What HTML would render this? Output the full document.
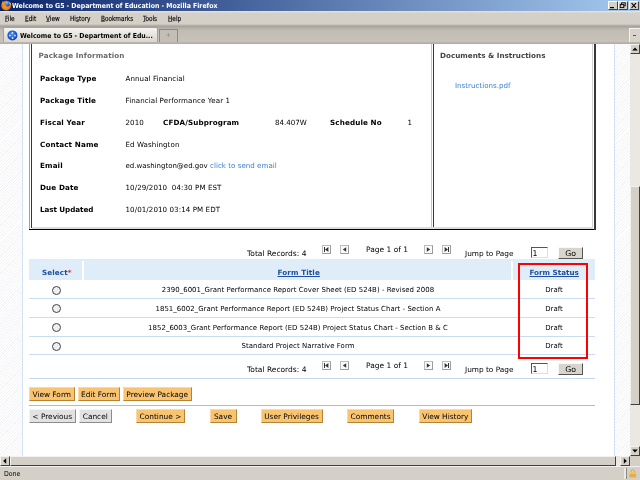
<!DOCTYPE html>
<html>
<head>
<meta charset="utf-8">
<title>Welcome to G5 - Department of Education</title>
<style>
html,body{margin:0;padding:0;}
body{width:640px;height:480px;overflow:hidden;position:relative;background:#d4d0c8;font-family:"DejaVu Sans","Liberation Sans",sans-serif;font-size:7.1px;color:#000;}
.a{position:absolute;white-space:nowrap;}
.t{position:absolute;white-space:nowrap;line-height:10px;height:10px;}
.ch{font-family:"DejaVu Sans Condensed","Liberation Sans",sans-serif;}
#titlebar{left:0;top:0;width:640px;height:11px;background:linear-gradient(to right,#0a246a 0%,#a6caf0 100%);}
#titletext{left:12px;top:1px;color:#fff;font-weight:bold;font-size:6.9px;line-height:11px;}
#menubar{left:0;top:11px;width:640px;height:16px;background:linear-gradient(to bottom,#e6e3dc 0,#dedbd3 1.2px,#d4d0c8 2.2px);}
#menubar u{text-decoration-color:rgba(0,0,0,0.5);text-underline-offset:0.4px;}
#menubar span{position:absolute;top:3.4px;font-size:7.2px;line-height:10px;color:#000;transform:scaleX(0.89);transform-origin:0 0;-webkit-text-stroke:0.15px #000;}
#tabbar{left:0;top:24px;width:640px;height:20px;background:linear-gradient(to bottom,#d2cec6 0,#c0bcb4 1px,#a9a59d 2px,#a8a49c 2.6px,#b6b2aa 4px,#c1bdb5 7px,#c7c3bb 17.4px,#bab6ae 18.3px,#b0aca4 20px);}
#tab{left:2.5px;top:27.4px;width:155px;height:15px;background:linear-gradient(to bottom,#f6f5f1,#e6e3dd 50%,#d9d6cf);border:1px solid #a6a29a;border-bottom:none;border-radius:2px 2px 0 0;box-sizing:border-box;}
#tabtext{left:20px;top:30.7px;font-weight:bold;font-size:6.9px;line-height:11px;}
#newtab{left:158.6px;top:28.5px;width:19.2px;height:13.4px;background:#c3bfb7;border:1px solid #8e8a82;border-bottom:none;box-sizing:border-box;}
#tablist{left:629px;top:28px;width:11px;height:14px;background:#d8d4cc;border-left:1px solid #f4f2ee;border-top:1px solid #f4f2ee;box-sizing:border-box;}
.wb{position:absolute;top:1px;width:10px;height:9px;background:#d4d0c8;box-sizing:border-box;border:1px solid;border-color:#fff #404040 #404040 #fff;}
#page{left:0;top:44px;width:630px;height:412px;background:#fff;overflow:hidden;}
.hatch{position:absolute;top:0;height:412px;background:repeating-linear-gradient(135deg,#ffffff 0,#ffffff 1.3px,#f0f2f5 1.3px,#f0f2f5 2.0px);}
#hl{left:0;width:22px;border-right:1px solid #d3e2f5;}
#hr{left:614px;width:16px;border-left:1px solid #d3e2f5;box-sizing:border-box;}
.lbl{font-weight:bold;font-size:7.2px;letter-spacing:0.12px;}
.lnk{color:#3b7fd0;}
.val{letter-spacing:0.08px;}
.pg{font-size:7.5px;}
.hd{font-weight:bold;font-size:7.2px;}
.box{position:absolute;box-sizing:border-box;}
.row{position:absolute;left:29px;width:566px;height:1px;background:#c9dcf1;}
.pb{position:absolute;width:9px;height:9px;box-sizing:border-box;border:1px solid;border-color:#bcbcbc #9c9c9c #9c9c9c #bcbcbc;background:#fafafa;}
.ob{position:absolute;height:14px;box-sizing:border-box;background:#f8c471;border:1px solid;border-color:#fbd9a4 #b9822f #b9822f #fbd9a4;text-align:center;line-height:14px;font-size:7.4px;}
.gb{position:absolute;height:14px;box-sizing:border-box;background:#e2e2e2;border:1px solid;border-color:#f4f4f4 #8c8c8c #8c8c8c #f4f4f4;text-align:center;line-height:14px;font-size:7.4px;}
.rad{position:absolute;width:9px;height:9px;box-sizing:border-box;border:1px solid #444;border-radius:50%;background:#efefef;}
.inp{position:absolute;width:17px;height:11px;box-sizing:border-box;border:1px solid;border-color:#555 #ddd #ddd #555;background:#fff;font-size:7.8px;line-height:11px;padding-left:1px;}
.go{position:absolute;width:24.6px;height:12px;box-sizing:border-box;background:#d8d5cd;border:1px solid;border-color:#f8f8f8 #555 #555 #f8f8f8;text-align:center;font-size:7.8px;line-height:12px;}
.sbtn{background:#d4d0c8;box-sizing:border-box;border:1px solid;border-color:#f4f2ee #404040 #404040 #f4f2ee;}
</style>
</head>
<body>
<div id="root" class="a" style="left:0;top:0;width:640px;height:480px;overflow:hidden;will-change:transform">

<div class="a" id="titlebar"></div>
<svg class="a" style="left:1px;top:0" width="11" height="11" viewBox="0 0 11 11"><defs><radialGradient id="fo" cx="0.45" cy="0.5" r="0.6"><stop offset="0" stop-color="#fbb030"/><stop offset="0.7" stop-color="#ee7a14"/><stop offset="1" stop-color="#d8500c"/></radialGradient><radialGradient id="fb" cx="0.4" cy="0.3" r="0.8"><stop offset="0" stop-color="#7fd0ff"/><stop offset="0.6" stop-color="#2a6ad8"/><stop offset="1" stop-color="#0c2c8c"/></radialGradient></defs><circle cx="5.2" cy="5.6" r="4.9" fill="url(#fo)"/><circle cx="6.1" cy="3.7" r="2.7" fill="url(#fb)"/><path d="M0.6 4.4 L1.4 1 L3 2.2 Q4.6 1.6 5.2 2.6 Q4 3.2 4.2 4.4 Q4.8 5.6 6.4 5.6 Q5.6 6.8 4 6.6 Q1.6 6.4 0.6 4.4Z" fill="#f08a1c"/><path d="M8.6 1.8 Q10.4 3.4 9.8 6 Q9.2 4.2 8.2 3.4Z" fill="#f8c038"/><circle cx="2.4" cy="3.6" r="0.5" fill="#fbd048"/></svg>
<div class="a ch" id="titletext">Welcome to G5 - Department of Education - Mozilla Firefox</div>
<div class="wb" style="left:607.5px"></div>
<div class="wb" style="left:617.6px"></div>
<div class="wb" style="left:629px"></div>
<svg class="a" style="left:607px;top:1px" width="32" height="9" viewBox="0 0 32 9"><rect x="3" y="6" width="4" height="1.2" fill="#000"/><rect x="14.6" y="1.8" width="3.6" height="3" fill="none" stroke="#000" stroke-width="0.9"/><rect x="13.2" y="3.6" width="3.6" height="3" fill="#d4d0c8" stroke="#000" stroke-width="0.9"/><path d="M24.6 2.2 L29 6.8 M29 2.2 L24.6 6.8" stroke="#000" stroke-width="1.05"/></svg>
<div class="a ch" id="menubar">
<span style="left:4.8px"><u>F</u>ile</span>
<span style="left:25px"><u>E</u>dit</span>
<span style="left:46.4px"><u>V</u>iew</span>
<span style="left:69.8px">Hi<u>s</u>tory</span>
<span style="left:100.8px"><u>B</u>ookmarks</span>
<span style="left:143px"><u>T</u>ools</span>
<span style="left:168.4px"><u>H</u>elp</span>
</div>
<div class="a" id="tabbar"></div>
<div class="a" id="tab"></div>
<svg class="a" style="left:7px;top:30px" width="11" height="11" viewBox="0 0 11 11"><defs><radialGradient id="tg" cx="0.45" cy="0.4" r="0.65"><stop offset="0" stop-color="#4a9cf4"/><stop offset="0.6" stop-color="#1c5cd8"/><stop offset="1" stop-color="#1038a8"/></radialGradient></defs><circle cx="5.4" cy="5.4" r="5" fill="url(#tg)"/><circle cx="5.4" cy="2.9" r="0.95" fill="#f8e4c4"/><circle cx="2.9" cy="5.6" r="0.95" fill="#f8e4c4"/><circle cx="8" cy="5.6" r="0.95" fill="#f8e4c4"/><circle cx="5.6" cy="8" r="0.95" fill="#f8e4c4"/></svg>
<div class="a ch" id="tabtext">Welcome to G5 - Department of Edu...</div>
<div class="a" id="newtab"></div>
<div class="a" style="left:165.4px;top:32.2px;font-size:6.5px;line-height:7px;color:#8a8680">+</div>
<div class="a" id="tablist"></div>
<div class="a" style="left:633.4px;top:35px;width:3px;height:1px;background:#555"></div>
<div class="a" id="page">
<div class="hatch" id="hl"></div>
<div class="hatch" id="hr"></div>
</div>

<div class="a" id="content" style="left:0;top:44px;width:630px;height:412px;overflow:hidden"><div class="a" style="left:0;top:-44px;width:630px;height:480px">
<div class="box" style="left:29px;top:30px;width:1px;height:200px;background:#a0a0a0"></div>
<div class="box" style="left:31px;top:30px;width:1px;height:198px;background:#383838"></div>
<div class="box" style="left:32px;top:227px;width:561px;height:2px;background:#dcdcdc"></div>
<div class="box" style="left:29px;top:229px;width:567px;height:1px;background:#000"></div>
<div class="box" style="left:431px;top:30px;width:1px;height:197px;background:#c4c4c4"></div>
<div class="box" style="left:433px;top:30px;width:1px;height:197px;background:#383838"></div>
<div class="box" style="left:592px;top:30px;width:1px;height:197px;background:#d0d0d0"></div>
<div class="box" style="left:594px;top:30px;width:2px;height:200px;background:#383838"></div>
<div class="t hd" style="left:38.6px;top:51px;color:#6a6a6a;letter-spacing:0.1px">Package Information</div>
<div class="t hd" style="left:440px;top:51px;color:#444">Documents &amp; Instructions</div>
<div class="t lnk" style="left:455px;top:81px;">Instructions.pdf</div>
<div class="t lbl" style="left:40px;top:74px;">Package Type</div>
<div class="t val" style="left:125.5px;top:74px;">Annual Financial</div>
<div class="t lbl" style="left:40px;top:96px;">Package Title</div>
<div class="t val" style="left:125.5px;top:96px;">Financial Performance Year 1</div>
<div class="t lbl" style="left:40px;top:118px;">Fiscal Year</div>
<div class="t val" style="left:125.5px;top:118px;">2010</div>
<div class="t lbl" style="left:40px;top:140px;">Contact Name</div>
<div class="t val" style="left:125.5px;top:140px;">Ed Washington</div>
<div class="t lbl" style="left:40px;top:161px;">Email</div>
<div class="t val" style="left:125.5px;top:161px;"><span style="letter-spacing:0;font-size:7px">ed.washington@ed.gov</span></div>
<div class="t lbl" style="left:40px;top:183px;">Due Date</div>
<div class="t val" style="left:125.5px;top:183px;">10/29/2010&nbsp; 04:30 PM EST</div>
<div class="t lbl" style="left:40px;top:205px;letter-spacing:-0.06px">Last Updated</div>
<div class="t val" style="left:125.5px;top:205px;">10/01/2010 03:14 PM EDT</div>
<div class="t lnk" style="left:210px;top:161px;letter-spacing:0.02px">click to send email</div>
<div class="t lbl" style="left:163px;top:118px;">CFDA/Subprogram</div>
<div class="t " style="left:275px;top:118px;">84.407W</div>
<div class="t lbl" style="left:330px;top:118px;">Schedule No</div>
<div class="t " style="left:407.5px;top:118px;">1</div>
<div class="t pg" style="left:247px;top:249px;">Total Records: 4</div>
<div class="pb" style="left:322px;top:245px"></div>
<svg class="a" style="left:322px;top:245px" width="9" height="9" viewBox="0 0 9 9"><rect x="2" y="2" width="1" height="5" fill="#333"/><path d="M6.4 2 L3 4.5 L6.4 7Z" fill="#333"/></svg>
<div class="pb" style="left:340.4px;top:245px"></div>
<svg class="a" style="left:340.4px;top:245px" width="9" height="9" viewBox="0 0 9 9"><path d="M6.2 2.2 L2.8 4.5 L6.2 6.8Z" fill="#333"/></svg>
<div class="pb" style="left:424px;top:245px"></div>
<svg class="a" style="left:424px;top:245px" width="9" height="9" viewBox="0 0 9 9"><path d="M2.8 2.2 L6.2 4.5 L2.8 6.8Z" fill="#333"/></svg>
<div class="pb" style="left:442.3px;top:245px"></div>
<svg class="a" style="left:442.3px;top:245px" width="9" height="9" viewBox="0 0 9 9"><rect x="6" y="2" width="1" height="5" fill="#333"/><path d="M2.6 2 L6 4.5 L2.6 7Z" fill="#333"/></svg>
<div class="t pg" style="left:366px;top:245px;">Page 1 of 1</div>
<div class="t pg" style="left:465px;top:249px;font-size:7.35px">Jump to Page</div>
<div class="inp" style="left:530.5px;top:247px">1</div>
<div class="go" style="left:558.4px;top:247px">Go</div>
<div class="box" style="left:29px;top:259px;width:566px;height:21px;background:#deedf8"></div>
<div class="box" style="left:82px;top:261px;width:1.5px;height:19px;background:#fff"></div>
<div class="box" style="left:511px;top:261px;width:1.5px;height:19px;background:#fff"></div>
<div class="t lbl" style="left:42px;top:268px;color:#1f4fa0">Select<span style="color:#e02020">*</span></div>
<div class="t lbl" style="left:277.5px;top:268px;color:#1f4fa0"><u>Form Title</u></div>
<div class="t lbl" style="left:529.5px;top:268px;color:#1f4fa0;letter-spacing:0"><u>Form Status</u></div>
<div class="rad" style="left:52px;top:285.5px"></div>
<div class="t " style="left:83px;top:285px;width:430px;text-align:center;font-size:6.95px;letter-spacing:0.04px">2390_6001_Grant Performance Report Cover Sheet (ED 524B) - Revised 2008</div>
<div class="t " style="left:513px;top:285px;width:82px;text-align:center;font-size:6.95px">Draft</div>
<div class="rad" style="left:52px;top:304.2px"></div>
<div class="t " style="left:83px;top:304px;width:430px;text-align:center;font-size:6.95px;letter-spacing:0.04px">1851_6002_Grant Performance Report (ED 524B) Project Status Chart - Section A</div>
<div class="t " style="left:513px;top:304px;width:82px;text-align:center;font-size:6.95px">Draft</div>
<div class="rad" style="left:52px;top:322.9px"></div>
<div class="t " style="left:83px;top:323px;width:430px;text-align:center;font-size:6.95px;letter-spacing:0.04px">1852_6003_Grant Performance Report (ED 524B) Project Status Chart - Section B &amp; C</div>
<div class="t " style="left:513px;top:323px;width:82px;text-align:center;font-size:6.95px">Draft</div>
<div class="rad" style="left:52px;top:341.6px"></div>
<div class="t " style="left:83px;top:341px;width:430px;text-align:center;font-size:6.95px;letter-spacing:0.04px">Standard Project Narrative Form</div>
<div class="t " style="left:513px;top:341px;width:82px;text-align:center;font-size:6.95px">Draft</div>
<div class="row" style="top:298px"></div>
<div class="row" style="top:317px"></div>
<div class="row" style="top:336px"></div>
<div class="row" style="top:354px"></div>
<div class="box" style="left:518px;top:263px;width:70px;height:95.5px;border:2px solid #ff0000"></div>
<div class="t pg" style="left:247px;top:365px;">Total Records: 4</div>
<div class="pb" style="left:322px;top:361px"></div>
<svg class="a" style="left:322px;top:361px" width="9" height="9" viewBox="0 0 9 9"><rect x="2" y="2" width="1" height="5" fill="#333"/><path d="M6.4 2 L3 4.5 L6.4 7Z" fill="#333"/></svg>
<div class="pb" style="left:340.4px;top:361px"></div>
<svg class="a" style="left:340.4px;top:361px" width="9" height="9" viewBox="0 0 9 9"><path d="M6.2 2.2 L2.8 4.5 L6.2 6.8Z" fill="#333"/></svg>
<div class="pb" style="left:424px;top:361px"></div>
<svg class="a" style="left:424px;top:361px" width="9" height="9" viewBox="0 0 9 9"><path d="M2.8 2.2 L6.2 4.5 L2.8 6.8Z" fill="#333"/></svg>
<div class="pb" style="left:442.3px;top:361px"></div>
<svg class="a" style="left:442.3px;top:361px" width="9" height="9" viewBox="0 0 9 9"><rect x="6" y="2" width="1" height="5" fill="#333"/><path d="M2.6 2 L6 4.5 L2.6 7Z" fill="#333"/></svg>
<div class="t pg" style="left:366px;top:361px;">Page 1 of 1</div>
<div class="t pg" style="left:465px;top:365px;font-size:7.35px">Jump to Page</div>
<div class="inp" style="left:530.5px;top:363px">1</div>
<div class="go" style="left:558.4px;top:363px">Go</div>
<div class="box" style="left:29px;top:378px;width:566px;height:1px;background:#c4d9f0"></div>
<div class="box" style="left:29px;top:405px;width:566px;height:1px;background:#9dc0e8"></div>
<div class="ob" style="left:29px;top:387px;width:45.5px">View Form</div>
<div class="ob" style="left:78px;top:387px;width:41.5px">Edit Form</div>
<div class="ob" style="left:122.5px;top:387px;width:69.5px">Preview Package</div>
<div class="gb" style="left:29px;top:408.7px;width:46.5px">&lt; Previous</div>
<div class="gb" style="left:79px;top:408.7px;width:32.5px">Cancel</div>
<div class="ob" style="left:136px;top:408.7px;width:49px">Continue &gt;</div>
<div class="ob" style="left:209.5px;top:408.7px;width:27px">Save</div>
<div class="ob" style="left:260.5px;top:408.7px;width:62px">User Privileges</div>
<div class="ob" style="left:346.7px;top:408.7px;width:47.7px">Comments</div>
<div class="ob" style="left:418.7px;top:408.7px;width:53.3px">View History</div>
</div></div>


<div class="a" id="vsb" style="left:630px;top:44px;width:10px;height:412px;background:#ebe8e3"></div>
<div class="a sbtn" style="left:630px;top:44px;width:10px;height:10px"></div>
<div class="a sbtn" style="left:630px;top:185.6px;width:10px;height:219px"></div>
<div class="a sbtn" style="left:630px;top:446px;width:10px;height:10px"></div>
<svg class="a" style="left:630px;top:44px" width="10" height="10" viewBox="0 0 10 10"><path d="M2.2 6.4 L5 3.4 L7.8 6.4Z" fill="#000"/></svg>
<svg class="a" style="left:630px;top:446px" width="10" height="10" viewBox="0 0 10 10"><path d="M2.2 3.6 L5 6.6 L7.8 3.6Z" fill="#000"/></svg>
<div class="a" style="left:0;top:456px;width:640px;height:10px;background:#d4d0c8"></div>
<div class="a" style="left:10px;top:456px;width:620px;height:10px;background:#ebe8e3"></div>
<div class="a sbtn" style="left:0;top:456px;width:10px;height:10px"></div>
<div class="a sbtn" style="left:10px;top:456px;width:606px;height:10px"></div>
<div class="a sbtn" style="left:619.5px;top:456px;width:10.5px;height:10px"></div>
<svg class="a" style="left:0;top:456px" width="10" height="10" viewBox="0 0 10 10"><path d="M6.2 2.2 L3.2 5 L6.2 7.8Z" fill="#000"/></svg>
<svg class="a" style="left:620px;top:456px" width="10" height="10" viewBox="0 0 10 10"><path d="M3.8 2.2 L6.8 5 L3.8 7.8Z" fill="#000"/></svg>
<div class="a" style="left:0;top:466px;width:640px;height:14px;background:#d4d0c8;border-top:1px solid #f2f0ec;box-sizing:border-box"></div>
<div class="a ch" style="left:4px;top:469px;font-size:6.9px;line-height:10px">Done</div>
<div class="a" style="left:626px;top:468px;width:1px;height:11px;background:#8c8880"></div>
<svg class="a" style="left:628px;top:468px" width="10" height="11" viewBox="0 0 10 11"><path d="M3 5 V3.4 Q3 1.7 4.7 1.7 Q6.4 1.7 6.4 3.4 V5" fill="none" stroke="#dcae54" stroke-width="1.1"/><rect x="1.3" y="4.4" width="6.8" height="5.2" rx="0.5" fill="#e6ae44"/><rect x="1.3" y="4.4" width="6.8" height="1.3" fill="#f2cc7a"/></svg>
<div class="a" style="left:624px;top:468px;width:1.5px;height:11px;background:#ebe9e4"></div>

</div>
</body>
</html>
